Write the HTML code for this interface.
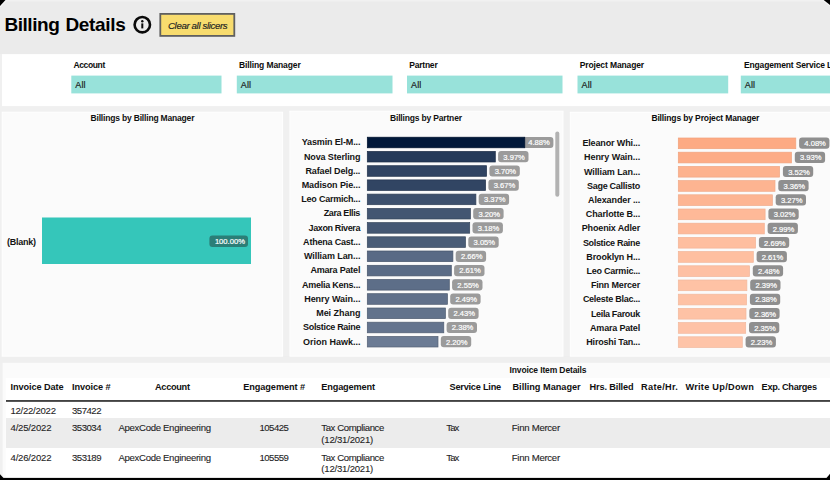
<!DOCTYPE html>
<html><head><meta charset="utf-8"><title>Billing Details</title>
<style>
html,body{margin:0;padding:0;}
body{width:830px;height:480px;overflow:hidden;background:#ebebeb;font-family:"Liberation Sans",sans-serif;position:relative;}
#r{position:absolute;left:0;top:0;width:830px;height:480px;overflow:hidden;}
#r>div,#r>span,#r>svg{position:absolute;display:block;white-space:nowrap;}
</style></head><body><div id="r">
<svg style="left:0;top:0" width="830" height="480" viewBox="0 0 830 480" font-family="Liberation Sans, sans-serif">
<rect x="0" y="0" width="830" height="1.6" fill="#f1f1f1"/>
<g transform="translate(132,14)"><circle cx="10.3" cy="10.7" r="7.7" fill="none" stroke="#0a0a0a" stroke-width="2.6"/><circle cx="10.3" cy="7.3" r="1.2" fill="#0a0a0a"/><rect x="9.3" y="9.4" width="2" height="5" fill="#0a0a0a"/></g>
<rect x="160.3" y="13.9" width="74" height="22" fill="#f8dc6e" stroke="#606060" stroke-width="1.8"/>
<rect x="1.7" y="54.1" width="829" height="52.3" fill="#fff"/>
<rect x="71.3" y="75.6" width="150.2" height="17.8" fill="#98e2da"/>
<rect x="236.8" y="75.6" width="155.7" height="17.8" fill="#98e2da"/>
<rect x="407" y="75.6" width="155.5" height="17.8" fill="#98e2da"/>
<rect x="577.5" y="75.6" width="150.7" height="17.8" fill="#98e2da"/>
<rect x="740.8" y="75.6" width="100" height="17.8" fill="#98e2da"/>
<rect x="0" y="54" width="2" height="424" fill="#f0f0f0"/>
<rect x="0" y="356.5" width="830" height="6.5" fill="#efefef"/>
<rect x="283" y="111.3" width="6.5" height="245.2" fill="#f0f0f0"/>
<rect x="563.2" y="111.3" width="6.3" height="245.2" fill="#f0f0f0"/>
<rect x="0" y="106.3" width="830" height="6" fill="#f0f0f0"/>
<rect x="2.2" y="112.2" width="280.4" height="244" fill="#fbfbfb" stroke="#fff" stroke-width="1"/>
<rect x="289.9" y="111.2" width="273.1" height="245" fill="#fbfbfb" stroke="#fff" stroke-width="1"/>
<rect x="570.2" y="112.3" width="261" height="243.9" fill="#fbfbfb" stroke="#fff" stroke-width="1"/>
<rect x="42" y="217.5" width="209" height="46.5" fill="#35c6ba"/>
<rect x="209.4" y="235.6" width="38.6" height="11.4" fill="#2b7e77" rx="3"/>
<rect x="523" y="136.9" width="30.4" height="11.2" fill="#9b9b9b" rx="3"/>
<rect x="367.3" y="137.2" width="157.5" height="10.6" fill="#01183a" stroke="#01132e" stroke-width="0.7"/>
<rect x="498.1" y="151.1" width="30.4" height="11.2" fill="#9b9b9b" rx="3"/>
<rect x="367.3" y="151.4" width="128.0" height="10.6" fill="#253a59" stroke="#1e2e47" stroke-width="0.7"/>
<rect x="489.4" y="165.4" width="30.4" height="11.2" fill="#9b9b9b" rx="3"/>
<rect x="367.3" y="165.7" width="119.3" height="10.6" fill="#304462" stroke="#26364e" stroke-width="0.7"/>
<rect x="488.4" y="179.6" width="30.4" height="11.2" fill="#9b9b9b" rx="3"/>
<rect x="367.3" y="179.9" width="118.3" height="10.6" fill="#314563" stroke="#27374f" stroke-width="0.7"/>
<rect x="478.7" y="193.8" width="30.4" height="11.2" fill="#9b9b9b" rx="3"/>
<rect x="367.3" y="194.1" width="108.6" height="10.6" fill="#3d506d" stroke="#314057" stroke-width="0.7"/>
<rect x="473.2" y="208.1" width="30.4" height="11.2" fill="#9b9b9b" rx="3"/>
<rect x="367.3" y="208.4" width="103.1" height="10.6" fill="#435672" stroke="#36455b" stroke-width="0.7"/>
<rect x="472.5" y="222.3" width="30.4" height="11.2" fill="#9b9b9b" rx="3"/>
<rect x="367.3" y="222.6" width="102.4" height="10.6" fill="#445773" stroke="#36465c" stroke-width="0.7"/>
<rect x="468.3" y="236.5" width="30.4" height="11.2" fill="#9b9b9b" rx="3"/>
<rect x="367.3" y="236.8" width="98.2" height="10.6" fill="#495c77" stroke="#3a4a5f" stroke-width="0.7"/>
<rect x="455.7" y="250.7" width="30.4" height="11.2" fill="#9b9b9b" rx="3"/>
<rect x="367.3" y="251.0" width="85.6" height="10.6" fill="#596a85" stroke="#47556a" stroke-width="0.7"/>
<rect x="454.1" y="265.0" width="30.4" height="11.2" fill="#9b9b9b" rx="3"/>
<rect x="367.3" y="265.3" width="84.0" height="10.6" fill="#5b6c86" stroke="#49566b" stroke-width="0.7"/>
<rect x="452.1" y="279.2" width="30.4" height="11.2" fill="#9b9b9b" rx="3"/>
<rect x="367.3" y="279.5" width="82.0" height="10.6" fill="#5d6e88" stroke="#4a586d" stroke-width="0.7"/>
<rect x="450.2" y="293.4" width="30.4" height="11.2" fill="#9b9b9b" rx="3"/>
<rect x="367.3" y="293.7" width="80.1" height="10.6" fill="#60708a" stroke="#4d5a6e" stroke-width="0.7"/>
<rect x="448.2" y="307.7" width="30.4" height="11.2" fill="#9b9b9b" rx="3"/>
<rect x="367.3" y="308.0" width="78.1" height="10.6" fill="#62738c" stroke="#4e5c70" stroke-width="0.7"/>
<rect x="446.6" y="321.9" width="30.4" height="11.2" fill="#9b9b9b" rx="3"/>
<rect x="367.3" y="322.2" width="76.5" height="10.6" fill="#64748e" stroke="#505d72" stroke-width="0.7"/>
<rect x="440.8" y="336.1" width="30.4" height="11.2" fill="#9b9b9b" rx="3"/>
<rect x="367.3" y="336.4" width="70.7" height="10.6" fill="#6b7b94" stroke="#566276" stroke-width="0.7"/>
<rect x="555.3" y="131.4" width="4" height="65.3" fill="#b2b2b2" rx="2"/>
<rect x="799.1" y="137.5" width="30.3" height="11.2" fill="#8f8f8f" rx="3"/>
<rect x="678.3" y="138.0" width="117.5" height="10.7" fill="#fdaa83" stroke="#f0a27c" stroke-width="0.7"/>
<rect x="794.8" y="151.7" width="30.3" height="11.2" fill="#8f8f8f" rx="3"/>
<rect x="678.3" y="152.2" width="113.2" height="10.7" fill="#fdac86" stroke="#f0a37f" stroke-width="0.7"/>
<rect x="782.9" y="165.9" width="30.3" height="11.2" fill="#8f8f8f" rx="3"/>
<rect x="678.3" y="166.4" width="101.3" height="10.7" fill="#fdb28e" stroke="#f0a987" stroke-width="0.7"/>
<rect x="778.3" y="180.1" width="30.3" height="11.2" fill="#8f8f8f" rx="3"/>
<rect x="678.3" y="180.6" width="96.7" height="10.7" fill="#fdb491" stroke="#f0ab8a" stroke-width="0.7"/>
<rect x="775.7" y="194.3" width="30.3" height="11.2" fill="#8f8f8f" rx="3"/>
<rect x="678.3" y="194.8" width="94.1" height="10.7" fill="#fdb593" stroke="#f0ac8c" stroke-width="0.7"/>
<rect x="768.4" y="208.5" width="30.3" height="11.2" fill="#8f8f8f" rx="3"/>
<rect x="678.3" y="209.0" width="86.8" height="10.7" fill="#feb998" stroke="#f1b090" stroke-width="0.7"/>
<rect x="767.6" y="222.7" width="30.3" height="11.2" fill="#8f8f8f" rx="3"/>
<rect x="678.3" y="223.2" width="86.0" height="10.7" fill="#feb999" stroke="#f1b091" stroke-width="0.7"/>
<rect x="758.9" y="236.9" width="30.3" height="11.2" fill="#8f8f8f" rx="3"/>
<rect x="678.3" y="237.4" width="77.3" height="10.7" fill="#febe9f" stroke="#f1b497" stroke-width="0.7"/>
<rect x="756.6" y="251.1" width="30.3" height="11.2" fill="#8f8f8f" rx="3"/>
<rect x="678.3" y="251.6" width="75.0" height="10.7" fill="#febfa0" stroke="#f1b598" stroke-width="0.7"/>
<rect x="752.8" y="265.3" width="30.3" height="11.2" fill="#8f8f8f" rx="3"/>
<rect x="678.3" y="265.8" width="71.2" height="10.7" fill="#fec0a3" stroke="#f1b69b" stroke-width="0.7"/>
<rect x="750.2" y="279.5" width="30.3" height="11.2" fill="#8f8f8f" rx="3"/>
<rect x="678.3" y="280.0" width="68.6" height="10.7" fill="#fec2a5" stroke="#f1b89d" stroke-width="0.7"/>
<rect x="749.9" y="293.7" width="30.3" height="11.2" fill="#8f8f8f" rx="3"/>
<rect x="678.3" y="294.2" width="68.3" height="10.7" fill="#fec2a5" stroke="#f1b89d" stroke-width="0.7"/>
<rect x="749.3" y="307.9" width="30.3" height="11.2" fill="#8f8f8f" rx="3"/>
<rect x="678.3" y="308.4" width="67.7" height="10.7" fill="#fec2a5" stroke="#f1b89d" stroke-width="0.7"/>
<rect x="749.0" y="322.1" width="30.3" height="11.2" fill="#8f8f8f" rx="3"/>
<rect x="678.3" y="322.6" width="67.4" height="10.7" fill="#fec2a6" stroke="#f1b89e" stroke-width="0.7"/>
<rect x="745.6" y="336.3" width="30.3" height="11.2" fill="#8f8f8f" rx="3"/>
<rect x="678.3" y="336.8" width="64.0" height="10.7" fill="#fec4a8" stroke="#f1baa0" stroke-width="0.7"/>
<rect x="2.4" y="362.8" width="828" height="116" fill="#fbfbfb"/>
<rect x="5.6" y="378" width="825" height="101" fill="#fff"/>
<rect x="6" y="400.1" width="824" height="1.7" fill="#2e2e2e"/>
<rect x="6" y="418" width="824" height="30" fill="#ececec"/>
<rect x="0" y="477.9" width="830" height="2.1" fill="#000"/>
<path d="M0,6.8 L6.2,0 M823,0 L830,5.6" stroke="#f6f6f6" stroke-width="1.4" fill="none"/><polygon points="0,0 5.5,0 0,6.1" fill="#000"/><polygon points="830,0 823.7,0 830,5" fill="#000"/><polygon points="0,474.2 0,480 5.4,480" fill="#000"/><polygon points="830,473.7 830,480 824.9,480" fill="#000"/>
<text x="4.40" y="31" font-size="19" fill="#000" font-weight="bold" letter-spacing="-0.441">Billing</text>
<text x="65.40" y="31" font-size="19" fill="#000" font-weight="bold" letter-spacing="-0.318">Details</text>
<text x="168.00" y="29" font-size="9.7" fill="#222" font-style="italic" letter-spacing="-0.373" stroke="#222" stroke-width="0.15">Clear all slicers</text>
<text x="73.50" y="68" font-size="8.5" fill="#0c0c0c" font-weight="bold" letter-spacing="-0.375">Account</text>
<text x="75.30" y="88" font-size="9" fill="#1c1c1c" letter-spacing="0.149" stroke="#1c1c1c" stroke-width="0.2">All</text>
<text x="239.00" y="68" font-size="8.5" fill="#0c0c0c" font-weight="bold" letter-spacing="-0.110">Billing Manager</text>
<text x="240.80" y="88" font-size="9" fill="#1c1c1c" letter-spacing="0.149" stroke="#1c1c1c" stroke-width="0.2">All</text>
<text x="409.20" y="68" font-size="8.5" fill="#0c0c0c" font-weight="bold" letter-spacing="-0.210">Partner</text>
<text x="411.00" y="88" font-size="9" fill="#1c1c1c" letter-spacing="0.149" stroke="#1c1c1c" stroke-width="0.2">All</text>
<text x="579.70" y="68" font-size="8.5" fill="#0c0c0c" font-weight="bold" letter-spacing="-0.117">Project Manager</text>
<text x="581.50" y="88" font-size="9" fill="#1c1c1c" letter-spacing="0.149" stroke="#1c1c1c" stroke-width="0.2">All</text>
<text x="744.00" y="68" font-size="8.5" fill="#0c0c0c" font-weight="bold" letter-spacing="-0.157">Engagement Service Line</text>
<text x="744.80" y="88" font-size="9" fill="#1c1c1c" letter-spacing="0.149" stroke="#1c1c1c" stroke-width="0.2">All</text>
<text x="142.41" y="121" font-size="8.5" fill="#111" font-weight="bold" text-anchor="middle" letter-spacing="-0.178">Billings by Billing Manager</text>
<text x="425.91" y="121" font-size="8.5" fill="#111" font-weight="bold" text-anchor="middle" letter-spacing="-0.172">Billings by Partner</text>
<text x="705.33" y="121" font-size="8.5" fill="#0c0c0c" font-weight="bold" text-anchor="middle" letter-spacing="-0.134">Billings by Project Manager</text>
<text x="7.00" y="245" font-size="9" fill="#141414" font-weight="bold" letter-spacing="-0.250">(Blank)</text>
<text x="229.90" y="244" font-size="7.6" fill="#fff" text-anchor="middle" letter-spacing="0.004" stroke="#fff" stroke-width="0.2">100.00%</text>
<text x="539.00" y="145" font-size="7.6" fill="#fff" text-anchor="middle" letter-spacing="-0.008" stroke="#fff" stroke-width="0.2">4.88%</text>
<text x="360.26" y="145" font-size="9" fill="#141414" font-weight="bold" text-anchor="end" letter-spacing="-0.140">Yasmin El-M...</text>
<text x="514.12" y="160" font-size="7.6" fill="#fff" text-anchor="middle" letter-spacing="-0.008" stroke="#fff" stroke-width="0.2">3.97%</text>
<text x="360.27" y="160" font-size="9" fill="#141414" font-weight="bold" text-anchor="end" letter-spacing="-0.134">Nova Sterling</text>
<text x="505.38" y="174" font-size="7.6" fill="#fff" text-anchor="middle" letter-spacing="-0.008" stroke="#fff" stroke-width="0.2">3.70%</text>
<text x="360.28" y="174" font-size="9" fill="#141414" font-weight="bold" text-anchor="end" letter-spacing="-0.117">Rafael Delg...</text>
<text x="504.40" y="188" font-size="7.6" fill="#fff" text-anchor="middle" letter-spacing="-0.008" stroke="#fff" stroke-width="0.2">3.67%</text>
<text x="360.30" y="188" font-size="9" fill="#141414" font-weight="bold" text-anchor="end" letter-spacing="-0.101">Madison Pie...</text>
<text x="494.68" y="202" font-size="7.6" fill="#fff" text-anchor="middle" letter-spacing="-0.008" stroke="#fff" stroke-width="0.2">3.37%</text>
<text x="360.18" y="202" font-size="9" fill="#141414" font-weight="bold" text-anchor="end" letter-spacing="-0.224">Leo Carmich...</text>
<text x="489.18" y="217" font-size="7.6" fill="#fff" text-anchor="middle" letter-spacing="-0.008" stroke="#fff" stroke-width="0.2">3.20%</text>
<text x="360.03" y="216" font-size="9" fill="#141414" font-weight="bold" text-anchor="end" letter-spacing="-0.369">Zara Ellis</text>
<text x="488.53" y="231" font-size="7.6" fill="#fff" text-anchor="middle" letter-spacing="-0.008" stroke="#fff" stroke-width="0.2">3.18%</text>
<text x="360.02" y="231" font-size="9" fill="#141414" font-weight="bold" text-anchor="end" letter-spacing="-0.385">Jaxon Rivera</text>
<text x="484.32" y="245" font-size="7.6" fill="#fff" text-anchor="middle" letter-spacing="-0.008" stroke="#fff" stroke-width="0.2">3.05%</text>
<text x="360.19" y="245" font-size="9" fill="#141414" font-weight="bold" text-anchor="end" letter-spacing="-0.209">Athena Cast...</text>
<text x="471.68" y="259" font-size="7.6" fill="#fff" text-anchor="middle" letter-spacing="-0.008" stroke="#fff" stroke-width="0.2">2.66%</text>
<text x="360.32" y="259" font-size="9" fill="#141414" font-weight="bold" text-anchor="end" letter-spacing="-0.079">William Lan...</text>
<text x="470.06" y="273" font-size="7.6" fill="#fff" text-anchor="middle" letter-spacing="-0.008" stroke="#fff" stroke-width="0.2">2.61%</text>
<text x="360.20" y="273" font-size="9" fill="#141414" font-weight="bold" text-anchor="end" letter-spacing="-0.203">Amara Patel</text>
<text x="468.12" y="288" font-size="7.6" fill="#fff" text-anchor="middle" letter-spacing="-0.008" stroke="#fff" stroke-width="0.2">2.55%</text>
<text x="360.16" y="288" font-size="9" fill="#141414" font-weight="bold" text-anchor="end" letter-spacing="-0.240">Amelia Kens...</text>
<text x="466.17" y="302" font-size="7.6" fill="#fff" text-anchor="middle" letter-spacing="-0.008" stroke="#fff" stroke-width="0.2">2.49%</text>
<text x="360.36" y="302" font-size="9" fill="#141414" font-weight="bold" text-anchor="end" letter-spacing="-0.040">Henry Wain...</text>
<text x="464.23" y="316" font-size="7.6" fill="#fff" text-anchor="middle" letter-spacing="-0.008" stroke="#fff" stroke-width="0.2">2.43%</text>
<text x="360.36" y="316" font-size="9" fill="#141414" font-weight="bold" text-anchor="end" letter-spacing="-0.037">Mei Zhang</text>
<text x="462.61" y="330" font-size="7.6" fill="#fff" text-anchor="middle" letter-spacing="-0.008" stroke="#fff" stroke-width="0.2">2.38%</text>
<text x="360.08" y="330" font-size="9" fill="#141414" font-weight="bold" text-anchor="end" letter-spacing="-0.325">Solstice Raine</text>
<text x="456.78" y="345" font-size="7.6" fill="#fff" text-anchor="middle" letter-spacing="-0.008" stroke="#fff" stroke-width="0.2">2.20%</text>
<text x="360.38" y="345" font-size="9" fill="#141414" font-weight="bold" text-anchor="end" letter-spacing="-0.018">Orion Hawk...</text>
<text x="815.11" y="146" font-size="7.6" fill="#fff" text-anchor="middle" letter-spacing="-0.008" stroke="#fff" stroke-width="0.2">4.08%</text>
<text x="640.07" y="146" font-size="9" fill="#141414" font-weight="bold" text-anchor="end" letter-spacing="-0.131">Eleanor Whi...</text>
<text x="810.77" y="160" font-size="7.6" fill="#fff" text-anchor="middle" letter-spacing="-0.008" stroke="#fff" stroke-width="0.2">3.93%</text>
<text x="640.16" y="160" font-size="9" fill="#141414" font-weight="bold" text-anchor="end" letter-spacing="-0.040">Henry Wain...</text>
<text x="798.90" y="175" font-size="7.6" fill="#fff" text-anchor="middle" letter-spacing="-0.008" stroke="#fff" stroke-width="0.2">3.52%</text>
<text x="640.11" y="175" font-size="9" fill="#141414" font-weight="bold" text-anchor="end" letter-spacing="-0.094">William Lan...</text>
<text x="794.27" y="189" font-size="7.6" fill="#fff" text-anchor="middle" letter-spacing="-0.008" stroke="#fff" stroke-width="0.2">3.36%</text>
<text x="639.92" y="189" font-size="9" fill="#141414" font-weight="bold" text-anchor="end" letter-spacing="-0.277">Sage Callisto</text>
<text x="791.66" y="203" font-size="7.6" fill="#fff" text-anchor="middle" letter-spacing="-0.008" stroke="#fff" stroke-width="0.2">3.27%</text>
<text x="640.08" y="203" font-size="9" fill="#141414" font-weight="bold" text-anchor="end" letter-spacing="-0.118">Alexander ...</text>
<text x="784.43" y="217" font-size="7.6" fill="#fff" text-anchor="middle" letter-spacing="-0.008" stroke="#fff" stroke-width="0.2">3.02%</text>
<text x="640.07" y="217" font-size="9" fill="#141414" font-weight="bold" text-anchor="end" letter-spacing="-0.127">Charlotte B...</text>
<text x="783.56" y="232" font-size="7.6" fill="#fff" text-anchor="middle" letter-spacing="-0.008" stroke="#fff" stroke-width="0.2">2.99%</text>
<text x="640.06" y="231" font-size="9" fill="#141414" font-weight="bold" text-anchor="end" letter-spacing="-0.140">Phoenix Adler</text>
<text x="774.87" y="246" font-size="7.6" fill="#fff" text-anchor="middle" letter-spacing="-0.008" stroke="#fff" stroke-width="0.2">2.69%</text>
<text x="639.88" y="246" font-size="9" fill="#141414" font-weight="bold" text-anchor="end" letter-spacing="-0.325">Solstice Raine</text>
<text x="772.56" y="260" font-size="7.6" fill="#fff" text-anchor="middle" letter-spacing="-0.008" stroke="#fff" stroke-width="0.2">2.61%</text>
<text x="640.07" y="260" font-size="9" fill="#141414" font-weight="bold" text-anchor="end" letter-spacing="-0.134">Brooklyn H...</text>
<text x="768.79" y="274" font-size="7.6" fill="#fff" text-anchor="middle" letter-spacing="-0.008" stroke="#fff" stroke-width="0.2">2.48%</text>
<text x="639.97" y="274" font-size="9" fill="#141414" font-weight="bold" text-anchor="end" letter-spacing="-0.235">Leo Carmic...</text>
<text x="766.19" y="288" font-size="7.6" fill="#fff" text-anchor="middle" letter-spacing="-0.008" stroke="#fff" stroke-width="0.2">2.39%</text>
<text x="640.03" y="288" font-size="9" fill="#141414" font-weight="bold" text-anchor="end" letter-spacing="-0.171">Finn Mercer</text>
<text x="765.90" y="302" font-size="7.6" fill="#fff" text-anchor="middle" letter-spacing="-0.008" stroke="#fff" stroke-width="0.2">2.38%</text>
<text x="639.93" y="302" font-size="9" fill="#141414" font-weight="bold" text-anchor="end" letter-spacing="-0.267">Celeste Blac...</text>
<text x="765.32" y="317" font-size="7.6" fill="#fff" text-anchor="middle" letter-spacing="-0.008" stroke="#fff" stroke-width="0.2">2.36%</text>
<text x="639.86" y="317" font-size="9" fill="#141414" font-weight="bold" text-anchor="end" letter-spacing="-0.338">Leila Farouk</text>
<text x="765.03" y="331" font-size="7.6" fill="#fff" text-anchor="middle" letter-spacing="-0.008" stroke="#fff" stroke-width="0.2">2.35%</text>
<text x="640.02" y="331" font-size="9" fill="#141414" font-weight="bold" text-anchor="end" letter-spacing="-0.183">Amara Patel</text>
<text x="761.55" y="345" font-size="7.6" fill="#fff" text-anchor="middle" letter-spacing="-0.008" stroke="#fff" stroke-width="0.2">2.23%</text>
<text x="640.01" y="345" font-size="9" fill="#141414" font-weight="bold" text-anchor="end" letter-spacing="-0.188">Hiroshi Tan...</text>
<text x="547.94" y="373" font-size="8.5" fill="#111" font-weight="bold" text-anchor="middle" letter-spacing="-0.124">Invoice Item Details</text>
<text x="10.50" y="390" font-size="9.2" fill="#111" font-weight="bold" letter-spacing="-0.102">Invoice Date</text>
<text x="72.00" y="390" font-size="9.2" fill="#111" font-weight="bold" letter-spacing="-0.103">Invoice #</text>
<text x="155.00" y="390" font-size="9.2" fill="#111" font-weight="bold" letter-spacing="-0.292">Account</text>
<text x="243.30" y="390" font-size="9.2" fill="#111" font-weight="bold" letter-spacing="-0.100">Engagement #</text>
<text x="321.30" y="390" font-size="9.2" fill="#111" font-weight="bold" letter-spacing="-0.159">Engagement</text>
<text x="449.50" y="390" font-size="9.2" fill="#111" font-weight="bold" letter-spacing="-0.221">Service Line</text>
<text x="512.50" y="390" font-size="9.2" fill="#111" font-weight="bold" letter-spacing="-0.015">Billing Manager</text>
<text x="589.60" y="390" font-size="9.2" fill="#111" font-weight="bold" letter-spacing="-0.144">Hrs. Billed</text>
<text x="641.10" y="390" font-size="9.2" fill="#111" font-weight="bold" letter-spacing="0.297">Rate/Hr.</text>
<text x="685.40" y="390" font-size="9.2" fill="#111" font-weight="bold" letter-spacing="0.270">Write Up/Down</text>
<text x="761.60" y="390" font-size="9.2" fill="#111" font-weight="bold" letter-spacing="-0.302">Exp. Charges</text>
<text x="10.50" y="414" font-size="9.6" fill="#1e1e1e" letter-spacing="-0.280" stroke="#1e1e1e" stroke-width="0.1">12/22/2022</text>
<text x="72.00" y="414" font-size="9.6" fill="#1e1e1e" letter-spacing="-0.503" stroke="#1e1e1e" stroke-width="0.1">357422</text>
<text x="10.50" y="431" font-size="9.6" fill="#1e1e1e" letter-spacing="-0.210" stroke="#1e1e1e" stroke-width="0.1">4/25/2022</text>
<text x="72.00" y="431" font-size="9.6" fill="#1e1e1e" letter-spacing="-0.503" stroke="#1e1e1e" stroke-width="0.1">353034</text>
<text x="118.50" y="431" font-size="9.6" fill="#1e1e1e" letter-spacing="-0.325" stroke="#1e1e1e" stroke-width="0.1">ApexCode Engineering</text>
<text x="259.50" y="431" font-size="9.6" fill="#1e1e1e" letter-spacing="-0.543" stroke="#1e1e1e" stroke-width="0.1">105425</text>
<text x="321.30" y="431" font-size="9.6" fill="#1e1e1e" letter-spacing="-0.404" stroke="#1e1e1e" stroke-width="0.1">Tax Compliance</text>
<text x="321.30" y="443" font-size="9.6" fill="#1e1e1e" letter-spacing="-0.219" stroke="#1e1e1e" stroke-width="0.1">(12/31/2021)</text>
<text x="446.30" y="431" font-size="9.6" fill="#1e1e1e" letter-spacing="-0.965" stroke="#1e1e1e" stroke-width="0.1">Tax</text>
<text x="511.80" y="431" font-size="9.6" fill="#1e1e1e" letter-spacing="-0.288" stroke="#1e1e1e" stroke-width="0.1">Finn Mercer</text>
<text x="10.50" y="461" font-size="9.6" fill="#1e1e1e" letter-spacing="-0.210" stroke="#1e1e1e" stroke-width="0.1">4/26/2022</text>
<text x="72.00" y="461" font-size="9.6" fill="#1e1e1e" letter-spacing="-0.503" stroke="#1e1e1e" stroke-width="0.1">353189</text>
<text x="118.50" y="461" font-size="9.6" fill="#1e1e1e" letter-spacing="-0.325" stroke="#1e1e1e" stroke-width="0.1">ApexCode Engineering</text>
<text x="259.50" y="461" font-size="9.6" fill="#1e1e1e" letter-spacing="-0.543" stroke="#1e1e1e" stroke-width="0.1">105559</text>
<text x="321.30" y="461" font-size="9.6" fill="#1e1e1e" letter-spacing="-0.404" stroke="#1e1e1e" stroke-width="0.1">Tax Compliance</text>
<text x="321.30" y="472" font-size="9.6" fill="#1e1e1e" letter-spacing="-0.219" stroke="#1e1e1e" stroke-width="0.1">(12/31/2021)</text>
<text x="446.30" y="461" font-size="9.6" fill="#1e1e1e" letter-spacing="-0.965" stroke="#1e1e1e" stroke-width="0.1">Tax</text>
<text x="511.80" y="461" font-size="9.6" fill="#1e1e1e" letter-spacing="-0.288" stroke="#1e1e1e" stroke-width="0.1">Finn Mercer</text>
</svg>
</div></body></html>
